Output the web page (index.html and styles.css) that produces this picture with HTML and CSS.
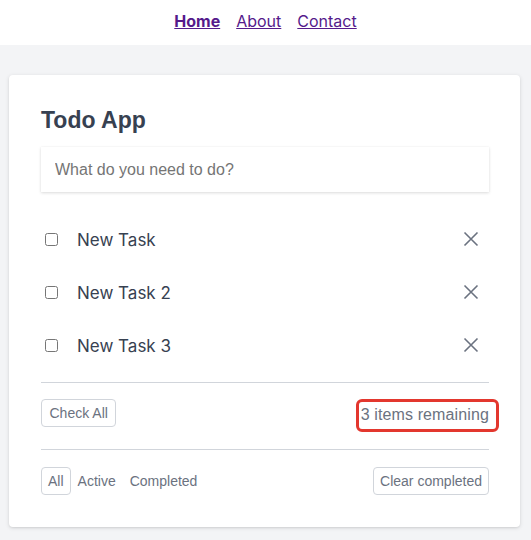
FILE: index.html
```html
<!DOCTYPE html>
<html lang="en">
<head>
<meta charset="utf-8">
<title>Todo App</title>
<link rel="stylesheet" href="styles.css">
</head>
<body>
<nav class="nav">
  <a href="#" class="nav-link active">Home</a>
  <a href="#" class="nav-link">About</a>
  <a href="#" class="nav-link">Contact</a>
</nav>
<main class="page">
  <section class="card">
    <h1 class="title">Todo App</h1>
    <input class="new-todo" type="text" placeholder="What do you need to do?">
    <ul class="todo-list">
      <li class="todo">
        <input type="checkbox" class="toggle">
        <span class="todo-text">New Task</span>
        <button class="remove" aria-label="Remove"><svg viewBox="0 0 16 16" width="16" height="16"><path d="M1.5 1.5 L14.5 14.5 M14.5 1.5 L1.5 14.5" stroke="#6b7280" stroke-width="1.6" fill="none"/></svg></button>
      </li>
      <li class="todo">
        <input type="checkbox" class="toggle">
        <span class="todo-text">New Task 2</span>
        <button class="remove" aria-label="Remove"><svg viewBox="0 0 16 16" width="16" height="16"><path d="M1.5 1.5 L14.5 14.5 M14.5 1.5 L1.5 14.5" stroke="#6b7280" stroke-width="1.6" fill="none"/></svg></button>
      </li>
      <li class="todo">
        <input type="checkbox" class="toggle">
        <span class="todo-text">New Task 3</span>
        <button class="remove" aria-label="Remove"><svg viewBox="0 0 16 16" width="16" height="16"><path d="M1.5 1.5 L14.5 14.5 M14.5 1.5 L1.5 14.5" stroke="#6b7280" stroke-width="1.6" fill="none"/></svg></button>
      </li>
    </ul>
    <div class="bar bar-top">
      <button class="btn btn-wide">Check All</button>
      <span class="remaining">3 items remaining</span>
    </div>
    <div class="bar bar-bottom">
      <div class="filters">
        <button class="btn">All</button>
        <button class="btn ghost">Active</button>
        <button class="btn ghost">Completed</button>
      </div>
      <button class="btn">Clear completed</button>
    </div>
  </section>
</main>
</body>
</html>
```
FILE: styles.css
```css
* { box-sizing: border-box; }
html, body { margin: 0; padding: 0; }
body {
  background: #f3f4f6;
  font-family: "Liberation Sans", Arial, sans-serif;
  color: #374151;
  min-height: 540px;
}
.nav {
  height: 45px;
  background: #ffffff;
  display: flex;
  justify-content: center;
  align-items: center;
  gap: 16px;
  padding-bottom: 4px;
}
.nav-link {
  font-family: Inter, sans-serif;
  font-size: 16px;
  color: #551a8b;
  text-decoration: underline;
}
.nav-link.active { font-weight: 700; }
.page {
  padding: 30px 11px 0 9px;
}
.card {
  background: #ffffff;
  border-radius: 4px;
  box-shadow: 0 1px 4px rgba(0,0,0,0.12), 0 1px 2px rgba(0,0,0,0.06);
  padding: 32px 31px 32px 32px;
}
.title {
  margin: 2px 0 0;
  font-size: 23px;
  line-height: 23px;
  font-weight: 700;
  color: #374151;
}
.new-todo {
  display: block;
  width: 100%;
  height: 45px;
  margin-top: 15px;
  border: none;
  outline: none;
  padding: 0 14px;
  font-family: "Liberation Sans", Arial, sans-serif;
  font-size: 16px;
  color: #374151;
  background: #fff;
  box-shadow: 0 1px 3px rgba(0,0,0,0.14), 0 0 1px rgba(0,0,0,0.06);
}
.new-todo::placeholder { color: #757575; }
.todo-list {
  list-style: none;
  margin: 21px 0 0;
  padding: 0;
}
.todo {
  height: 53px;
  display: flex;
  align-items: center;
}
.toggle {
  width: 13px;
  height: 13px;
  margin: 0 0 0 4px;
}
.todo-text {
  flex: 1;
  margin-left: 19px;
  font-family: Inter, sans-serif;
  font-size: 17px;
  color: #374151;
}
.remove {
  background: none;
  border: none;
  padding: 0;
  margin: -2px 10px 0 0;
  width: 16px;
  height: 16px;
  display: flex;
}
.bar {
  display: flex;
  justify-content: space-between;
  align-items: flex-start;
  border-top: 1px solid #d1d5db;
}
.bar-top {
  margin-top: 10px;
  padding: 16px 0 17px;
}
.bar-bottom {
  padding-top: 17px;
}
.filters { display: flex; }
.btn {
  height: 28px;
  padding: 0 6px;
  border: 1px solid #d1d5db;
  border-radius: 4px;
  background: #fff;
  font-family: "Liberation Sans", Arial, sans-serif;
  font-size: 14px;
  color: #6b7280;
}
.btn-wide { padding: 0 7.5px; }
.btn.ghost { border-color: transparent; }
.remaining {
  font-size: 16px;
  letter-spacing: 0.12px;
  color: #6b7280;
  height: 33px;
  line-height: 25px;
  padding: 0 7px 0 2px;
  margin-right: -10px;
  border: 3px solid #e3372e;
  border-radius: 6px;
}
```
